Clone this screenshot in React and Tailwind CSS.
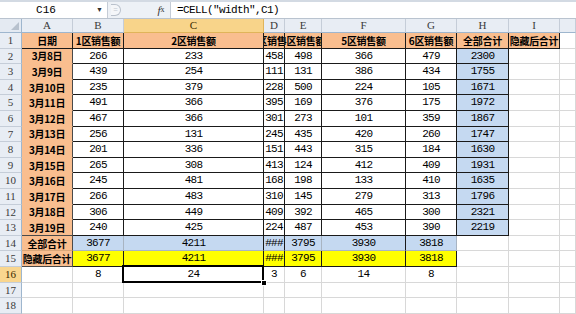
import React from 'react';

const num = "font-['Liberation_Mono',monospace] text-[11px] tracking-[-0.7px] text-black";
const cjk = "font-['Noto_Sans_CJK_SC',sans-serif] font-bold text-[10px] text-black tracking-[-0.3px]";
const base = 'flex items-center justify-center overflow-hidden whitespace-nowrap border-r border-b';

const dataRows = [
  ['3月8日', '266', '233', '458', '498', '366', '479', '2300'],
  ['3月9日', '439', '254', '111', '131', '386', '434', '1755'],
  ['3月10日', '235', '379', '228', '500', '224', '105', '1671'],
  ['3月11日', '491', '366', '395', '169', '376', '175', '1972'],
  ['3月12日', '467', '366', '301', '273', '101', '359', '1867'],
  ['3月13日', '256', '131', '245', '435', '420', '260', '1747'],
  ['3月14日', '201', '336', '151', '443', '315', '184', '1630'],
  ['3月15日', '265', '308', '413', '124', '412', '409', '1931'],
  ['3月16日', '245', '481', '168', '198', '133', '410', '1635'],
  ['3月17日', '266', '483', '310', '145', '279', '313', '1796'],
  ['3月18日', '306', '449', '409', '392', '465', '300', '2321'],
  ['3月19日', '240', '425', '224', '487', '453', '390', '2219'],
];

function RowHead({ n, sel }) {
  return (
    <div
      className={
        "flex items-center justify-center border-r border-b border-r-[#9eb6ce] border-b-[#c5cdd8] font-['Liberation_Serif',serif] text-[11px] " +
        (sel ? 'bg-[#f9d68f] text-[#3b2a00]' : 'bg-[#e8edf4] text-[#3a3a3a]')
      }
    >
      {n}
    </div>
  );
}

function Grid({ children }) {
  return <div className={base + ' border-[#d8d8d8] bg-white'}>{children}</div>;
}

export default function App() {
  const letters = ['A', 'B', 'C', 'D', 'E', 'F', 'G', 'H', 'I', ''];
  const headers = ['日期', '1区销售额', '2区销售额', '3区销售额', '4区销售额', '5区销售额', '6区销售额', '全部合计', '隐藏后合计'];
  return (
    <div className="w-[576px] h-[314px] overflow-hidden bg-white">
      {/* formula bar */}
      <div className="h-[19px] flex border-t-2 border-t-[#d3dae3] border-b border-b-[#b9c3cf] bg-[#edf1f6]">
        <div className="w-[92px] bg-white flex items-center justify-center font-['Liberation_Mono',monospace] text-[11px] text-black">C16</div>
        <div className="w-[15px] bg-white flex items-center justify-center text-[7px] text-[#333]">▼</div>
        <div className="w-[1px] bg-[#c5ccd6]"></div>
        <div className="w-[44px] flex items-center pl-[3px]">
          <div className="w-[10px] h-[12px] rounded-r-full border border-[#b9c1cc] border-l-0 bg-[#f4f6f9] flex items-center justify-center text-[8px] text-[#c0c6cf]">=</div>
        </div>
        <div className="w-[18px] flex items-center justify-center font-['Liberation_Serif',serif] italic text-[11px] text-[#333]">
          f<span className="text-[8px] not-italic">x</span>
        </div>
        <div className="w-[1px] bg-[#c5ccd6]"></div>
        <div className="flex-1 bg-white flex items-center pl-[6px] font-['Liberation_Mono',monospace] text-[11px] tracking-[-0.6px] text-black">
          =CELL("width",C1)
        </div>
      </div>

      <div className="grid grid-cols-[22px_51px_51px_140px_21px_37px_84px_51px_52px_51px_1fr] grid-rows-[14px] auto-rows-[15.6px]">
        {/* column headers */}
        <div className="relative border-r border-b border-r-[#9eb6ce] border-b-[#9eb6ce] bg-[#e4eaf2]">
          <svg className="absolute right-[2px] bottom-[2px]" width="8" height="8" viewBox="0 0 8 8">
            <polygon points="8,0 8,8 0,8" fill="#b7c1cd" />
          </svg>
        </div>
        {letters.map((l, i) => (
          <div
            key={'h' + i}
            className={
              "flex items-center justify-center border-r border-b font-['Liberation_Serif',serif] text-[11px] " +
              (l === 'C'
                ? 'bg-[#f8d48a] border-r-[#e0b45a] border-b-[#e0b45a] text-[#3b2a00]'
                : 'bg-[#e8edf4] border-r-[#c5cdd8] border-b-[#9eb6ce] text-[#3a3a3a]')
            }
          >
            {l}
          </div>
        ))}

        {/* row 1 */}
        <RowHead n="1" />
        {headers.map((h, i) => (
          <div key={'r1' + i} className={base + ' border-[#1a1a1a] bg-[#f9be8f] ' + cjk}>
            {h}
          </div>
        ))}
        <Grid />

        {/* rows 2-13 */}
        {dataRows.map((r, ri) => (
          <React.Fragment key={'r' + ri}>
            <RowHead n={String(ri + 2)} />
            <div
              className={
                base +
                ' bg-[#f9be8f] border-r-[#4a4a4a] ' +
                (ri === 11 ? 'border-b-[#4a4a4a] ' : 'border-b-[#f9be8f] ') +
                cjk
              }
            >
              {r[0]}
            </div>
            {r.slice(1, 7).map((v, ci) => (
              <div key={ci} className={base + ' border-[#1a1a1a] bg-white ' + num}>
                {v}
              </div>
            ))}
            <div className={base + ' border-[#1a1a1a] bg-[#c5d9f1] ' + num}>{r[7]}</div>
            <Grid />
            <Grid />
          </React.Fragment>
        ))}

        {/* row 14 */}
        <RowHead n="14" />
        <div className={base + ' bg-[#f9be8f] border-r-[#4a4a4a] border-b-[#d9a679] ' + cjk}>全部合计</div>
        {['3677', '4211', '###', '3795', '3930', '3818'].map((v, i) => (
          <div
            key={'s' + i}
            className={
              base +
              ' bg-[#c5d9f1] border-b-[#a8b4c2] ' +
              (i === 0 || i === 3 || i === 5 ? 'border-r-[#a8b4c2] ' : 'border-r-[#1a1a1a] ') +
              num
            }
          >
            {v}
          </div>
        ))}
        <Grid />
        <Grid />
        <Grid />

        {/* row 15 */}
        <RowHead n="15" />
        <div className={base + ' bg-[#f9be8f] border-[#4a4a4a] ' + cjk}>隐藏后合计</div>
        {['3677', '4211', '###', '3795', '3930', '3818'].map((v, i) => (
          <div key={'y' + i} className={base + ' bg-[#ffff00] border-[#1a1a1a] ' + num}>
            {v}
          </div>
        ))}
        <Grid />
        <Grid />
        <Grid />

        {/* row 16 */}
        <RowHead n="16" sel />
        <Grid />
        <div className={base + ' border-[#d8d8d8] bg-white ' + num}>8</div>
        <div className={'relative z-10 flex items-center justify-center whitespace-nowrap border-r border-b border-[#d8d8d8] bg-white ' + num}>
          24
          <div className="absolute left-[-2px] top-[-2px] right-[-1px] bottom-[-1px] border-2 border-black"></div>
          <div className="absolute right-[-4px] bottom-[-4px] w-[6px] h-[6px] bg-black border border-white"></div>
        </div>
        {['3', '6', '14', '8'].map((v, i) => (
          <div key={'c' + i} className={base + ' border-[#d8d8d8] bg-white ' + num}>
            {v}
          </div>
        ))}
        <Grid />
        <Grid />
        <Grid />

        {/* rows 17-19 */}
        {[17, 18, 19].map((n) => (
          <React.Fragment key={'e' + n}>
            <RowHead n={String(n)} />
            {Array.from({ length: 10 }).map((_, i) => (
              <Grid key={i} />
            ))}
          </React.Fragment>
        ))}
      </div>
    </div>
  );
}
